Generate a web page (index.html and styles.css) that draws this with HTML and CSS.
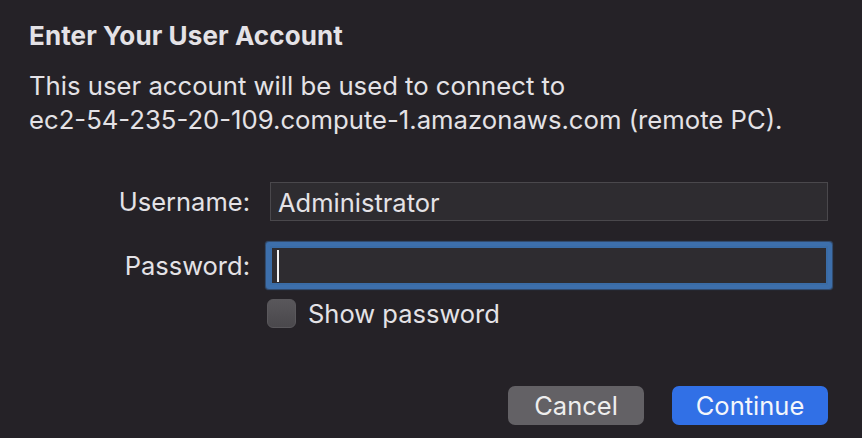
FILE: index.html
```html
<!DOCTYPE html>
<html>
<head>
<meta charset="utf-8">
<link rel="stylesheet" href="styles.css">
</head>
<body>
<div class="dialog">
  <h1 class="title">Enter Your User Account</h1>
  <p class="message">This user account will be used to connect to<br>ec2-54-235-20-109.compute-1.amazonaws.com (remote PC).</p>
  <div class="form">
    <label class="label">Username:</label>
    <div class="field">Administrator</div>
    <label class="label">Password:</label>
    <div class="field focused"><span class="caret"></span></div>
    <div></div>
    <div class="check-row"><span class="checkbox"></span><span class="check-label">Show password</span></div>
  </div>
  <div class="buttons">
    <button class="btn cancel">Cancel</button>
    <button class="btn primary">Continue</button>
  </div>
</div>
</body>
</html>
```
FILE: styles.css
```css
html, body {
  margin: 0;
  padding: 0;
  background: #252227;
  width: 862px;
  height: 438px;
  overflow: hidden;
}
.dialog {
  font-family: Inter, "Liberation Sans", sans-serif;
  color: #e4e2e6;
  padding: 20px 34px 0 29px;
}
.title {
  margin: 0;
  font-size: 26px;
  font-weight: 700;
  line-height: 32px;
  letter-spacing: 0.1px;
}
.message {
  margin: 17px 0 0;
  font-size: 25.7px;
  line-height: 34px;
  font-weight: 400;
}
.form {
  display: grid;
  grid-template-columns: 221px 558px;
  column-gap: 20px;
  row-gap: 25px;
  margin-top: 45px;
  align-items: center;
}
.label {
  text-align: right;
  font-size: 25.5px;
  line-height: 39px;
}
.field {
  height: 39px;
  box-sizing: border-box;
  border: 1px solid #4a484c;
  background: #2e2c30;
  font-size: 25.5px;
  padding-left: 7px;
  padding-top: 2px;
  display: flex;
  align-items: center;
}
.field.focused {
  border: 2px solid #3a6ca6;
  box-shadow: 0 0 0 4px #3d6fab, 0 0 1px 5px rgba(61, 111, 171, 0.6);
  border-radius: 1px;
  padding-left: 5px;
  padding-top: 0;
}
.caret {
  width: 2px;
  height: 32px;
  background: #f2f2f2;
}
.check-row {
  display: flex;
  align-items: center;
  margin-top: -11px;
  margin-left: -3px;
  gap: 12px;
  height: 29px;
}
.checkbox {
  width: 29px;
  height: 29px;
  border-radius: 6px;
  background: linear-gradient(#59575b, #4a484c);
  box-sizing: border-box;
  border: 1px solid #5a585c;
}
.check-label {
  font-size: 25.5px;
  line-height: 29px;
}
.buttons {
  display: flex;
  justify-content: flex-end;
  gap: 28px;
  margin-top: 58px;
}
.btn {
  font-family: Inter, "Liberation Sans", sans-serif;
  font-size: 25.5px;
  color: #eeeeee;
  border: none;
  border-radius: 7px;
  height: 39px;
  padding: 0;
  line-height: 39px;
}
.cancel {
  width: 136px;
  background: #636165;
}
.primary {
  width: 156px;
  background: #3170e6;
  color: #f4f6fb;
}
```
